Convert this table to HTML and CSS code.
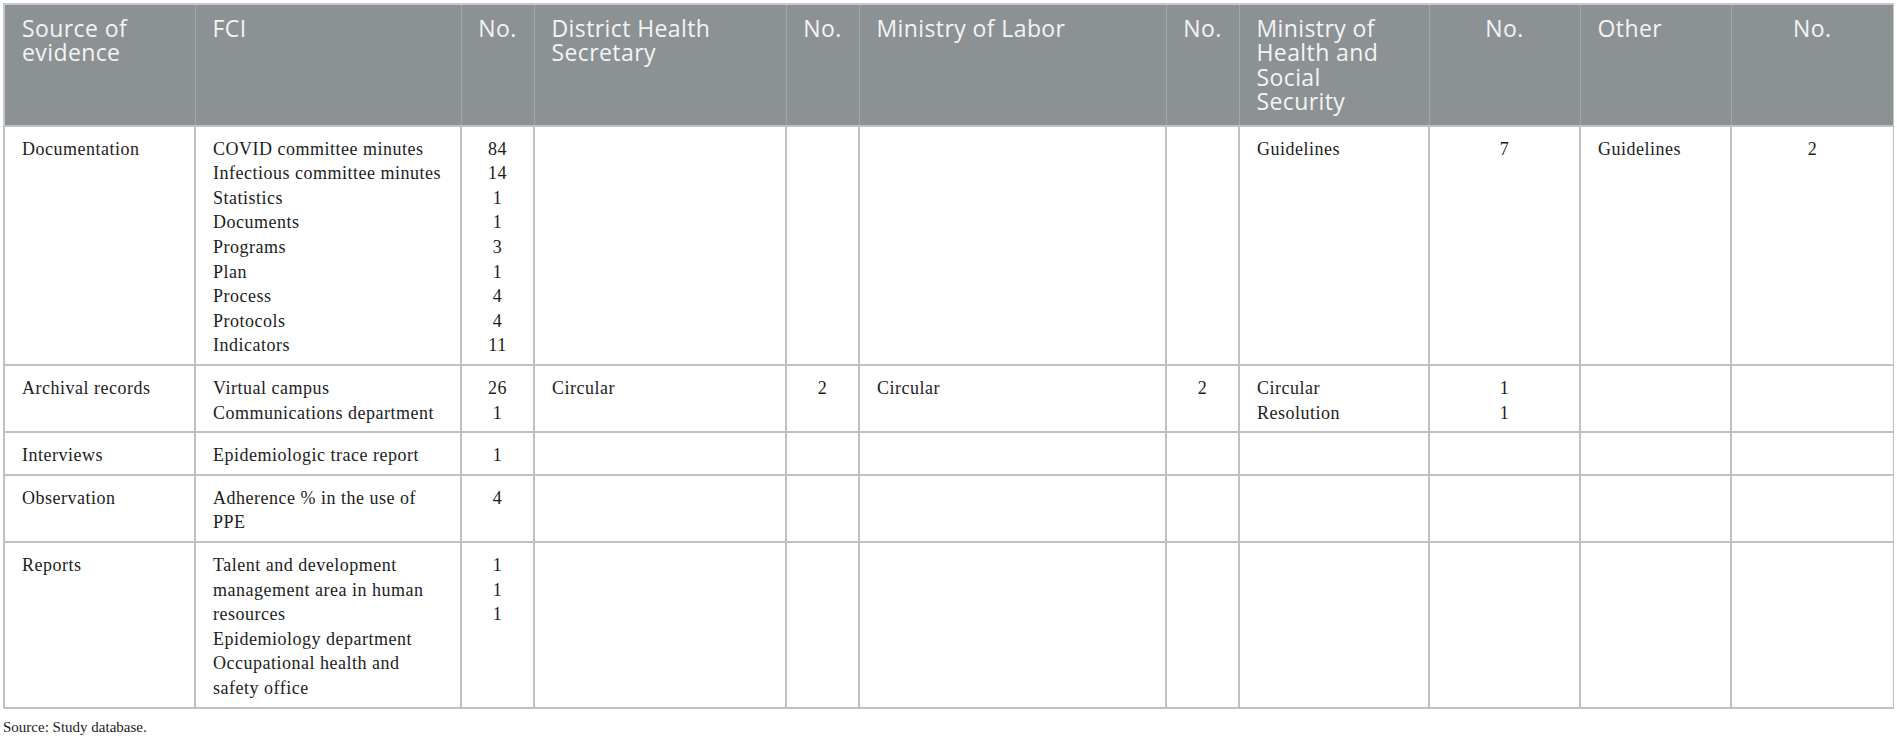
FILE: index.html
```html
<!DOCTYPE html>
<html lang="en">
<head>
<meta charset="utf-8">
<title>Sources of evidence</title>
<link rel="stylesheet" href="styles.css">
</head>
<body>
<table class="evidence">
  <colgroup>
    <col class="c-src"><col class="c-fci"><col class="c-no">
    <col class="c-dhs"><col class="c-no">
    <col class="c-mol"><col class="c-no">
    <col class="c-mhs"><col class="c-no2">
    <col class="c-oth"><col class="c-no3">
  </colgroup>
  <thead>
    <tr>
      <th>Source of evidence</th>
      <th>FCI</th>
      <th class="num">No.</th>
      <th>District Health Secretary</th>
      <th class="num">No.</th>
      <th>Ministry of Labor</th>
      <th class="num">No.</th>
      <th>Ministry of Health and Social Security</th>
      <th class="num">No.</th>
      <th>Other</th>
      <th class="num">No.</th>
    </tr>
  </thead>
  <tbody>
    <tr>
      <td>Documentation</td>
      <td class="fci">
        <div>COVID committee minutes</div>
        <div>Infectious committee minutes</div>
        <div>Statistics</div>
        <div>Documents</div>
        <div>Programs</div>
        <div>Plan</div>
        <div>Process</div>
        <div>Protocols</div>
        <div>Indicators</div>
      </td>
      <td class="num">
        <div>84</div><div>14</div><div>1</div><div>1</div><div>3</div><div>1</div><div>4</div><div>4</div><div>11</div>
      </td>
      <td></td>
      <td class="num"></td>
      <td></td>
      <td class="num"></td>
      <td>Guidelines</td>
      <td class="num">7</td>
      <td>Guidelines</td>
      <td class="num">2</td>
    </tr>
    <tr>
      <td>Archival records</td>
      <td class="fci">
        <div>Virtual campus</div>
        <div>Communications department</div>
      </td>
      <td class="num"><div>26</div><div>1</div></td>
      <td>Circular</td>
      <td class="num">2</td>
      <td>Circular</td>
      <td class="num">2</td>
      <td><div>Circular</div><div>Resolution</div></td>
      <td class="num"><div>1</div><div>1</div></td>
      <td></td>
      <td class="num"></td>
    </tr>
    <tr>
      <td>Interviews</td>
      <td class="fci">Epidemiologic trace report</td>
      <td class="num">1</td>
      <td></td><td class="num"></td><td></td><td class="num"></td><td></td><td class="num"></td><td></td><td class="num"></td>
    </tr>
    <tr>
      <td>Observation</td>
      <td class="fci">Adherence % in the use of<br>PPE</td>
      <td class="num">4</td>
      <td></td><td class="num"></td><td></td><td class="num"></td><td></td><td class="num"></td><td></td><td class="num"></td>
    </tr>
    <tr>
      <td>Reports</td>
      <td class="fci">
        <div>Talent and development<br>management area in human<br>resources</div>
        <div>Epidemiology department</div>
        <div>Occupational health and<br>safety office</div>
      </td>
      <td class="num"><div>1</div><div>1</div><div>1</div></td>
      <td></td><td class="num"></td><td></td><td class="num"></td><td></td><td class="num"></td><td></td><td class="num"></td>
    </tr>
  </tbody>
</table>
<p class="source">Source: Study database.</p>
</body>
</html>
```

FILE: styles.css
```css
html, body {
  background: #ffffff;
}
body {
  margin: 3px 3px 0 3px;
}
.evidence {
  width: 1892px;
  table-layout: fixed;
  border-collapse: collapse;
  border: 2px solid #c6c8c9;
  font-family: "Liberation Serif", "Times New Roman", serif;
  font-size: 18px;
  letter-spacing: 0.5px;
  line-height: 24.6px;
  color: #1c1c1c;
}
.c-src { width: 191px; }
.c-fci { width: 266px; }
.c-no { width: 73px; }
.c-dhs { width: 252px; }
.c-mol { width: 307px; }
.c-mhs { width: 190px; }
.c-no2 { width: 151px; }
.c-oth { width: 151px; }
.c-no3 { width: 163px; }

.evidence th {
  background: #8c9194;
  color: #f3f4f4;
  font-family: "Open Sans", "Noto Sans", sans-serif;
  font-weight: 400;
  font-size: 23px;
  letter-spacing: 0.4px;
  line-height: 24.4px;
  text-align: left;
  vertical-align: top;
  padding: 11px 20px 11px 17px;
  border-left: 1px solid #a3a7aa;
  border-right: 1px solid #a3a7aa;
}
.evidence th.num {
  text-align: center;
  padding-left: 8px;
  padding-right: 8px;
}
.evidence td {
  vertical-align: top;
  padding: 10px 18px 6px 17px;
  border: 2px solid #bfc0c0;
}
.evidence td.fci {
  padding-right: 6px;
}
.evidence td.num {
  text-align: center;
  padding-left: 6px;
  padding-right: 6px;
}
.source {
  margin: 9px 0 0 0;
  font-family: "Liberation Serif", "Times New Roman", serif;
  font-size: 15px;
  line-height: 18px;
  color: #1c1c1c;
}
```
